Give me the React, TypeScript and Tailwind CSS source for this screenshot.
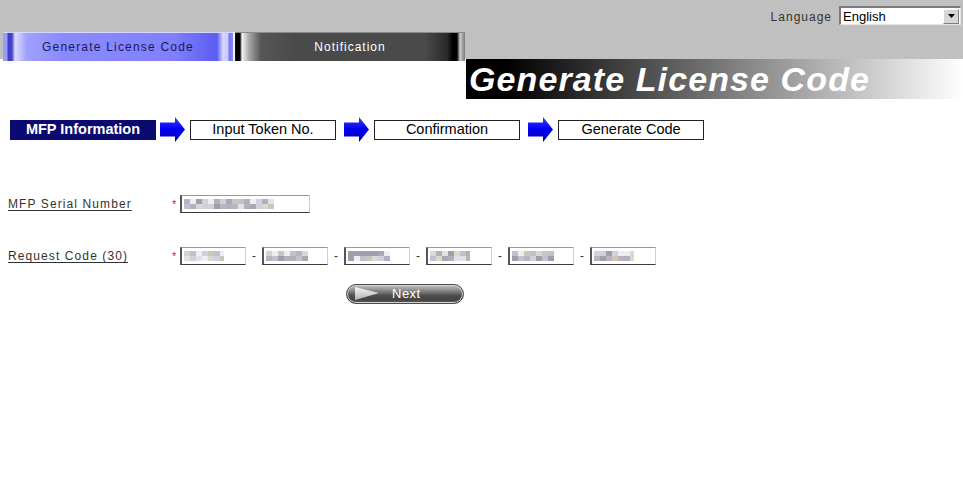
import React from "react";

const palette = ["#a09eae", "#b2b0be", "#c2c0cc", "#d2d0da", "#e2e0e8", "#aaa8b6", "#ccc6ba", "#dcd8d0", "#bab4c2", "#eeedf2"];

function Mosaic({ w, seed }: { w: number; seed: number }) {
  const cols = Math.ceil(w / 6);
  const rects: React.ReactNode[] = [];
  let s = seed;
  for (let r = 0; r < 2; r++) {
    for (let c = 0; c < cols; c++) {
      s = (s * 9301 + 49297) % 233280;
      const idx = Math.floor((s / 233280) * palette.length);
      rects.push(<rect key={r + "-" + c} x={c * 6} y={r * 5} width={6} height={5} fill={palette[idx]} />);
    }
  }
  return (
    <svg width={w} height={10} className="block">
      {rects}
    </svg>
  );
}

function Arrow() {
  return (
    <svg width="25" height="25" viewBox="0 0 25 25" className="block shrink-0">
      <defs>
        <linearGradient id="ag" x1="0" y1="0" x2="0" y2="1">
          <stop offset="0" stopColor="#3a3aff" />
          <stop offset="0.5" stopColor="#0000f0" />
          <stop offset="1" stopColor="#0000b0" />
        </linearGradient>
      </defs>
      <path d="M0 5.5 H15 V0 L25 12.5 L15 25 V19.5 H0 Z" fill="url(#ag)" />
    </svg>
  );
}

function TextInput({ w, mosaic, seed }: { w: number; mosaic: number; seed: number }) {
  return (
    <div
      className="h-[18px] bg-white border-t border-l-2 border-b border-r border-t-[#9a9a9a] border-l-[#555] border-b-[#3a3a3a] border-r-[#cfcfcf] flex items-center pl-[2px] shrink-0"
      style={{ width: w }}
    >
      <Mosaic w={mosaic} seed={seed} />
    </div>
  );
}

function Dash() {
  return <span className="w-[16px] text-center text-[12px] text-[#333]">-</span>;
}

export default function App() {
  return (
    <div className="w-[963px] h-[500px] bg-white overflow-hidden font-['Liberation_Sans',Arial,sans-serif]">
      <div className="bg-[#c0c0c0] h-[59px]">
        <div className="h-[32px] flex items-start justify-end pt-[6px] pr-[2px]">
          <span className="text-[12px] tracking-[1px] text-[#333] mt-[2px] mr-[7px]">Language</span>
          <div className="w-[122px] h-[19px] bg-white border-t-2 border-l-2 border-b border-r border-t-[#7a7a7a] border-l-[#7a7a7a] border-b-[#e4e4e4] border-r-[#e4e4e4] flex items-center justify-between">
            <span className="text-[13px] text-black pl-[2px] leading-none">English</span>
            <div className="w-[16px] h-[15px] bg-[#d6d6d6] border-t border-l border-b border-r border-t-white border-l-white border-b-[#808080] border-r-[#808080] flex items-center justify-center mr-[1px]">
              <svg width="7" height="4" viewBox="0 0 7 4" className="block">
                <path d="M0 0 H7 L3.5 4 Z" fill="#000" />
              </svg>
            </div>
          </div>
        </div>
        <div className="flex h-[29px] pl-[3px]">
          <div className="w-[230px] h-[29px] flex items-center justify-center text-[12px] tracking-[1.2px] text-[#1a1a50] bg-[linear-gradient(to_right,#9c9cf4_0px,#9c9cf4_4px,#3c3cc8_5px,#4444cc_9px,#dcdcff_12px,#a0a0ff_24px,#8a8aff_60px,#8080ff_170px,#5c5cf0_214px,#d8d8ff_220px,#c8c8ff_225px,#7474f0_226px,#8a8af8_230px)] border-t border-t-[#d8d8ff]">
            Generate License Code
          </div>
          <div className="w-[2px] h-[29px] bg-[#f0f0f0]" />
          <div className="w-[230px] h-[29px] flex items-center justify-center text-[12px] tracking-[1px] text-white bg-[linear-gradient(to_right,#222_0px,#000_1px,#000_5px,#f4f4f4_7px,#a8a8a8_14px,#565656_26px,#4a4a4a_60px,#4a4a4a_190px,#2a2a2a_212px,#000_218px,#000_222px,#d0d0d0_225px,#9a9a9a_228px,#7a7a7a_230px)] border-t border-t-[#8a8a8a]">
            Notification
          </div>
        </div>
      </div>

      <div className="flex justify-end">
        <div className="w-[497px] h-[40px] bg-[linear-gradient(to_right,#000_0%,#000_8%,#fff_100%)] flex items-center pl-[3px]">
          <span className="text-[34px] font-bold italic tracking-[1.1px] text-white leading-none">Generate License Code</span>
        </div>
      </div>

      <div className="mt-[18px] h-[25px] flex items-center pl-[10px]">
        <div className="w-[146px] h-[20px] bg-[#0a0a70] flex items-center justify-center text-[14.5px] font-bold text-white">
          MFP Information
        </div>
        <div className="ml-[4px]"><Arrow /></div>
        <div className="ml-[5px] w-[146px] h-[20px] border border-[#222] flex items-center justify-center text-[14.5px] text-black">
          Input Token No.
        </div>
        <div className="ml-[8px]"><Arrow /></div>
        <div className="ml-[5px] w-[146px] h-[20px] border border-[#222] flex items-center justify-center text-[14.5px] text-black">
          Confirmation
        </div>
        <div className="ml-[8px]"><Arrow /></div>
        <div className="ml-[5px] w-[146px] h-[20px] border border-[#222] flex items-center justify-center text-[14.5px] text-black">
          Generate Code
        </div>
      </div>

      <div className="mt-[53px] h-[18px] flex items-center">
        <div className="w-[172px] pl-[8px] text-[12px] tracking-[1.1px] text-[#333] underline underline-offset-2">MFP Serial Number</div>
        <div className="w-[8px] h-[18px] pt-[3px] text-[11px] text-[#d02020] leading-[12px]">*</div>
        <TextInput w={130} mosaic={90} seed={17} />
      </div>

      <div className="mt-[34px] h-[18px] flex items-center">
        <div className="w-[172px] pl-[8px] text-[12px] tracking-[1.1px] text-[#333] underline underline-offset-2">Request Code (30)</div>
        <div className="w-[8px] h-[18px] pt-[3px] text-[11px] text-[#d02020] leading-[12px]">*</div>
        <TextInput w={66} mosaic={40} seed={3} />
        <Dash />
        <TextInput w={66} mosaic={42} seed={29} />
        <Dash />
        <TextInput w={66} mosaic={42} seed={71} />
        <Dash />
        <TextInput w={66} mosaic={40} seed={113} />
        <Dash />
        <TextInput w={66} mosaic={42} seed={151} />
        <Dash />
        <TextInput w={66} mosaic={40} seed={203} />
      </div>

      <div className="mt-[19px] ml-[346px] w-[118px] h-[20px] rounded-full border border-[#4a4a4a] bg-[linear-gradient(to_bottom,#c4c4c4_0%,#808080_35%,#4c4c4c_60%,#444_80%,#5a5a5a_100%)] ring-1 ring-inset ring-[#d4d4d4] flex items-center">
        <svg width="26" height="14" viewBox="0 0 26 14" className="block ml-[7px]">
          <defs>
            <linearGradient id="tg" x1="0" y1="0" x2="0" y2="1">
              <stop offset="0" stopColor="#f4f4f4" />
              <stop offset="1" stopColor="#b4b4b4" />
            </linearGradient>
          </defs>
          <path d="M1 0 L25 6 L1 13 Z" fill="url(#tg)" />
        </svg>
        <span className="ml-[12px] text-[13px] tracking-[0.5px] text-white">Next</span>
      </div>
    </div>
  );
}
